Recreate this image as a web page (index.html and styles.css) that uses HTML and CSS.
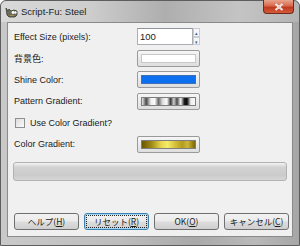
FILE: index.html
```html
<!DOCTYPE html>
<html lang="ja">

<head>
    <meta charset="UTF-8">
    <meta name="viewport" content="width=device-width, initial-scale=1.0">
    <title>Script-Fu: Steel</title>
    <link rel="stylesheet" href="styles.css">
</head>

<body>
    <div class="window">
        <div class="titlebar">
            <svg class="app-icon" width="13" height="12" viewBox="0 0 13 12">
                <path d="M1 2 L3 5 L4 3 L6 5 L9 4 L12 5 L12 9 L10 11 L4 11 L2 9 Z" fill="#6b6b5e" stroke="#3a3a34" stroke-width="0.8"/>
                <circle cx="8" cy="6.5" r="1.4" fill="#fff"/>
                <circle cx="10.4" cy="6.5" r="1.2" fill="#fff"/>
                <path d="M5 9.5 L9 9.5" stroke="#b08a40" stroke-width="1"/>
            </svg>
            <span class="title">Script-Fu: Steel</span>
            <div class="close-btn">
                <svg width="10" height="8" viewBox="0 0 10 8">
                    <path d="M1.5 1 L8.5 7 M8.5 1 L1.5 7" stroke="#fff" stroke-width="2"/>
                    <path d="M1.5 1 L8.5 7 M8.5 1 L1.5 7" stroke="#7a3a2a" stroke-width="0.5" opacity="0.5"/>
                </svg>
            </div>
        </div>
        <div class="client">
            <div class="form">
                <label>Effect Size (pixels):</label>
                <div class="spin">
                    <div class="spin-input">100</div>
                    <div class="spin-arrows">
                        <span>&#9652;</span>
                        <span>&#9662;</span>
                    </div>
                </div>

                <label>背景色:</label>
                <div class="swatch-btn"><div class="swatch white"></div></div>

                <label>Shine Color:</label>
                <div class="swatch-btn"><div class="swatch blue"></div></div>

                <label>Pattern Gradient:</label>
                <div class="swatch-btn"><div class="swatch pattern"></div></div>

                <div class="check-row">
                    <span class="checkbox"></span>
                    <span>Use Color Gradient?</span>
                </div>

                <label>Color Gradient:</label>
                <div class="swatch-btn"><div class="swatch gold"></div></div>
            </div>

            <div class="progress"></div>

            <div class="buttons">
                <button type="button" class="btn">ヘルプ(<u>H</u>)</button>
                <button type="button" class="btn focused">リセット(<u>R</u>)</button>
                <button type="button" class="btn">OK(<u>O</u>)</button>
                <button type="button" class="btn">キャンセル(<u>C</u>)</button>
            </div>
        </div>
        <div class="bottom-frame"></div>
    </div>
</body>

</html>
```

FILE: styles.css
```css
* {
    box-sizing: border-box;
}

body {
    margin: 0;
    padding: 0;
    font-family: "Liberation Sans", "Noto Sans CJK JP", sans-serif;
}

.window {
    width: 300px;
    height: 246px;
    display: flex;
    flex-direction: column;
    background: linear-gradient(to right, #c9c9c9 0%, #bdbdbd 40%, #a9a9a9 65%, #b9b9b9 85%, #a6a6a6 100%);
    border: 1px solid #5d5d5d;
    border-radius: 6px 6px 0 0;
}

.titlebar {
    height: 21px;
    display: flex;
    align-items: center;
    padding-left: 4px;
    position: relative;
    background: linear-gradient(to right, #d9d9d9 0%, #cdcdcd 30%, #aeaeae 55%, #c4c4c4 80%, #b4b4b4 100%);
    border-radius: 6px 6px 0 0;
}

.app-icon {
    margin-right: 3px;
}

.title {
    font-size: 9.5px;
    color: #1e1e1e;
}

.close-btn {
    position: absolute;
    right: 5px;
    top: -1px;
    width: 31px;
    height: 14px;
    display: flex;
    justify-content: center;
    align-items: center;
    background: linear-gradient(to bottom, #e8a48e 0%, #d8694e 45%, #c0391f 55%, #d45a3c 100%);
    border: 1px solid #6e2a1c;
    border-top: none;
    border-radius: 0 0 4px 4px;
}

.client {
    flex: 1;
    margin: 0 6px;
    background: #f0f0f0;
    border: 1px solid #8a8a8a;
    display: flex;
    flex-direction: column;
}

.bottom-frame {
    height: 8px;
}

.form {
    display: grid;
    grid-template-columns: 123px 63px;
    grid-auto-rows: 17px;
    row-gap: 4.5px;
    padding: 5px 0 0 6px;
    font-size: 9px;
    color: #1a1a1a;
}

.form label {
    display: flex;
    align-items: center;
}

.spin {
    display: flex;
}

.spin-input {
    width: 56px;
    height: 17px;
    background: #fff;
    border: 1px solid #abadb3;
    border-top-color: #8f939a;
    padding-left: 2px;
    display: flex;
    align-items: center;
    font-size: 9.5px;
}

.spin-arrows {
    width: 7px;
    display: flex;
    flex-direction: column;
    font-size: 5px;
    color: #3c5a8a;
    line-height: 8px;
    text-align: center;
}

.spin-arrows span {
    flex: 1;
    border: 1px solid #c8ccd4;
    background: #f4f6f8;
    height: 8px;
}

.swatch-btn {
    height: 17px;
    padding: 3px;
    border: 1px solid #9a9a9a;
    border-radius: 2px;
    background: linear-gradient(to bottom, #f6f6f6, #dedede);
}

.swatch {
    height: 100%;
    border: 1px solid #7e7e7e;
}

.white {
    background: #fff;
    border-color: #c8c8c8;
}

.blue {
    background: #0b6ff0;
    border-color: #3d6fb3;
}

.pattern {
    background: linear-gradient(to right,
        #e8e8e8 0%, #4a4a4a 8%, #f0f0f0 17%, #fafafa 24%, #6a6a6a 31%, #e0e0e0 39%,
        #fafafa 47%, #3a3a3a 54%, #cfcfcf 60%, #4a4a4a 66%, #f4f4f4 73%,
        #1a1a1a 80%, #0a0a0a 85%, #ececec 92%, #fafafa 100%);
}

.gold {
    background: linear-gradient(to right,
        #6a5600 0%, #a08a14 18%, #e6d650 36%, #f6ec6a 48%, #d8c23a 62%, #b49c1e 76%, #cdb83a 86%, #7a6608 100%);
}

.check-row {
    grid-column: 1 / 3;
    display: flex;
    align-items: center;
    gap: 5px;
    padding-left: 1px;
}

.checkbox {
    width: 10px;
    height: 10px;
    border: 1px solid #8e8f8f;
    background: linear-gradient(135deg, #dcdcdc, #fbfbfb);
}

.progress {
    margin: 9px 5px 0 5px;
    height: 19px;
    border: 1px solid #b2b2b2;
    border-radius: 3px;
    background: linear-gradient(to bottom, #f4f4f4 0%, #d2d2d2 25%, #cbcbcb 70%, #d6d6d6 100%);
}

.buttons {
    display: flex;
    gap: 5px;
    padding: 32px 0 0 6px;
}

.btn {
    width: 65px;
    height: 17px;
    padding: 0;
    font-family: "Noto Sans CJK JP", sans-serif;
    font-size: 8.5px;
    color: #1a1a1a;
    border: 1px solid #707070;
    border-radius: 3px;
    background: linear-gradient(to bottom, #f2f2f2 0%, #ebebeb 48%, #dddddd 52%, #cfcfcf 100%);
}

.btn.focused {
    border-color: #3c7fb1;
    box-shadow: inset 0 0 0 1px #a6d8f4;
    outline: 1px dotted #222;
    outline-offset: -3px;
}
```
